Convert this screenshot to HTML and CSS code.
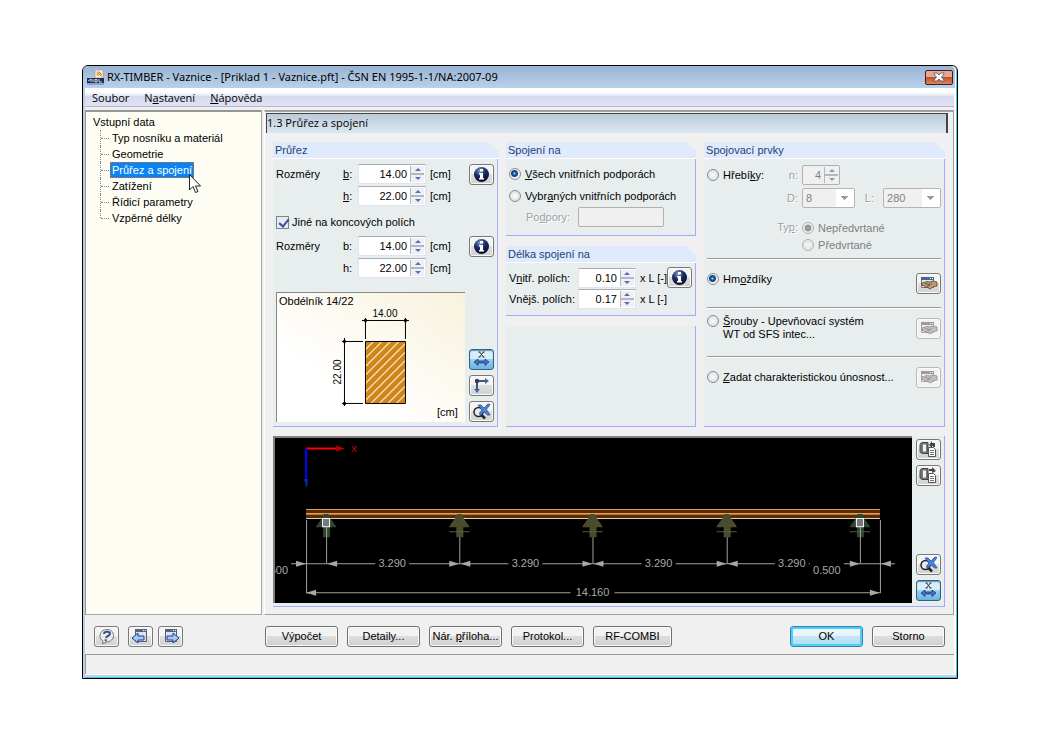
FILE: index.html
```html
<!DOCTYPE html>
<html lang="cs">
<head>
  <meta charset="UTF-8" />
  <meta name="viewport" content="width=device-width, initial-scale=1.0" />
  <title>RX-TIMBER - Vaznice</title>
  <link rel="stylesheet" href="styles.css">
</head>
<body>

  <!-- shared icons -->
  <svg class="defs" width="0" height="0" aria-hidden="true">
    <defs>
      <radialGradient id="ball" cx="0.4" cy="0.25" r="0.8">
        <stop offset="0" stop-color="#8d9ccc" />
        <stop offset="0.45" stop-color="#1c2a66" />
        <stop offset="1" stop-color="#050a26" />
      </radialGradient>
    </defs>
    <symbol id="i-info" viewBox="0 0 19 17">
      <circle cx="9.5" cy="8.5" r="7.5" fill="url(#ball)" />
      <path d="M8 3h3v2.500H8zM7 7h4v5h1v1.500H7V12h1V8.500H7z" fill="#fff" />
    </symbol>
    <symbol id="i-dim" viewBox="0 0 19 17">
      <path d="M7.500 1l4 5M11.500 1l-4 5M6.500 1h2M10.500 1h2M6.500 6h2M10.500 6h2" stroke="#333" stroke-width="1" fill="none" />
      <path d="M2 11l4-3v2h7V8l4 3-4 3.500V12H6v2.500z" fill="#4a70c8" stroke="#203870" stroke-width="0.8" />
    </symbol>
    <symbol id="i-axes" viewBox="0 0 19 17">
      <path d="M5 4h9M5 4v9" stroke="#44546c" stroke-width="2" fill="none" />
      <path d="M13 1l4 3-4 3zM2 12l3 4 3-4z" fill="#3d66b0" />
      <circle cx="5" cy="4" r="2.200" fill="#33425c" />
    </symbol>
    <symbol id="i-zoom" viewBox="0 0 19 17">
      <circle cx="6.500" cy="9" r="4.500" fill="#e4ebf2" stroke="#222" stroke-width="1.500" />
      <path d="M6 2h3l3 3 4-4 2 .5-3.500 5L18 12h-2.500L12 9l-4 3-.5-2L10 7z" fill="#4a82d8" stroke="#1f458f" stroke-width="0.7" />
      <path d="M9.500 12l3.500 3.500" stroke="#222" stroke-width="2.500" />
    </symbol>
    <symbol id="i-lib" viewBox="0 0 19 17">
      <path d="M2.500 2.500h12v10h-12z" fill="#e8e8ea" stroke="#777" />
      <path d="M2 2h13v3H2z" fill="#45669c" />
      <path d="M11 3h1v1h-1zM13 3h1v1h-1z" fill="#fff" />
      <path d="M3 8l5-1.500 3 .5 3-1 4 1v4l-3 .5-4 2.500-2-1.500-3-.5-1-1.500H3z" fill="#bd9c70" stroke="#5c452b" stroke-width="0.8" />
      <path d="M6 8.500l4 1 3-1M8 11l3-.5" stroke="#5c452b" stroke-width="0.8" fill="none" />
    </symbol>
    <symbol id="i-copy" viewBox="0 0 19 17">
      <path d="M4 1.500h5v11H4c-2 0-3-1-3-3v-5c0-2 1-3 3-3z" fill="#777" stroke="#444" />
      <path d="M4 3.500h3v7H4z" fill="#f4f4f4" />
      <path d="M9.500 6.500h5l2 2v7h-7z" fill="#fff" stroke="#555" />
      <path d="M11 9.500h4M11 11.500h4M11 13.500h4" stroke="#777" fill="none" />
    </symbol>
    <symbol id="i-page" viewBox="0 0 19 17">
      <path d="M4.500 1.500h11v12h-11z" fill="#dde3ec" stroke="#555d6c" />
      <path d="M4 1h12v3H4z" fill="#5a6478" />
      <path d="M12 2h1v1h-1zM14 2h1v1h-1z" fill="#fff" />
    </symbol>
    <!-- support arrow, tip in 0,0 -->
    <symbol id="i-support" viewBox="-12 -2 24 26" overflow="visible">
      <path d="M-2 0h4l2 2v2l6 8v1H4v10h-7V13h-7v-1l6-8V2z" />
    </symbol>
  </svg>

  <main class="window">
    <header class="titlebar">
      <svg class="app-icon" width="18" height="15" viewBox="0 0 18 15">
        <path d="M8 0h8v8H8z" fill="#fff3d8" stroke="#b8955c" stroke-width="0.7" />
        <path d="M9.500 2l5 4M11 1.500l4 3M9.500 4l2 2" stroke="#b26b20" fill="none" />
        <path d="M0 8h17v5H0z" fill="#1d2d58" />
        <path d="M1 11l3-2v3M6 9v3M8 9.500h2V12H8zM12 9v3h3" stroke="#fff" stroke-width="0.8" fill="none" />
        <path d="M0 14h17" stroke="#5c80b4" />
      </svg>
      <h1>RX-TIMBER - Vaznice - [Priklad 1 - Vaznice.pft] - ČSN EN 1995-1-1/NA:2007-09</h1>
      <button class="close" type="button" aria-label="Zavřít">
        <svg width="12" height="10" viewBox="0 0 12 10">
          <path d="M1 1h3l2 2 2-2h3v1L8.500 5 11 8v1H8L6 7 4 9H1V8l2.500-3L1 2z" fill="#fff" stroke="#4b4f68" stroke-width="0.8" />
        </svg>
      </button>
    </header>

    <nav class="menu">
      <a href="#">Soubor</a>
      <a href="#">N<u>a</u>stavení</a>
      <a href="#"><u>N</u>ápověda</a>
    </nav>

    <div class="workspace">
      <aside class="tree">
        <a href="#">Vstupní data</a>
        <ul>
          <li><a href="#">Typ nosníku a materiál</a></li>
          <li><a href="#">Geometrie</a></li>
          <li class="current">
            <a href="#">Průřez a spojení</a>
            <svg class="pointer" width="13" height="20" viewBox="0 0 13 20">
              <path d="M.5.500v15.500l3.500-3.500 2.500 6 2.500-1-2.500-5.500h5z" fill="#fff" stroke="#222" />
            </svg>
          </li>
          <li><a href="#">Zatížení</a></li>
          <li><a href="#">Řídicí parametry</a></li>
          <li><a href="#">Vzpěrné délky</a></li>
        </ul>
      </aside>

      <div class="pane">
        <h2 class="pane-title">1.3 Průřez a spojení</h2>

        <form class="panels" id="params">
          <section class="panel section-panel">
            <h3>Průřez</h3>
            <div class="panel-body">
              <div class="size-row">
                <span>Rozměry</span>
                <label for="b1"><u>b</u>:</label>
                <span class="number">
                  <input id="b1" type="text" value="14.00">
                  <span class="spin"><button type="button" aria-label="Více"></button><button type="button" aria-label="Méně"></button></span>
                </span>
                <span>[cm]</span>
                <button class="tool" type="button" aria-label="Informace"><svg><use href="#i-info" /></svg></button>
              </div>
              <div class="size-row">
                <span></span>
                <label for="h1"><u>h</u>:</label>
                <span class="number">
                  <input id="h1" type="text" value="22.00">
                  <span class="spin"><button type="button" aria-label="Více"></button><button type="button" aria-label="Méně"></button></span>
                </span>
                <span>[cm]</span>
              </div>
              <label class="check-row"><input type="checkbox" checked> Jiné na koncových polích</label>
              <div class="size-row">
                <span>Rozměry</span>
                <label for="b2">b:</label>
                <span class="number">
                  <input id="b2" type="text" value="14.00">
                  <span class="spin"><button type="button" aria-label="Více"></button><button type="button" aria-label="Méně"></button></span>
                </span>
                <span>[cm]</span>
                <button class="tool" type="button" aria-label="Informace"><svg><use href="#i-info" /></svg></button>
              </div>
              <div class="size-row">
                <span></span>
                <label for="h2">h:</label>
                <span class="number">
                  <input id="h2" type="text" value="22.00">
                  <span class="spin"><button type="button" aria-label="Více"></button><button type="button" aria-label="Méně"></button></span>
                </span>
                <span>[cm]</span>
              </div>

              <div class="preview-row">
                <div class="preview">
                  <svg viewBox="0 0 188 129">
                    <defs>
                      <pattern id="hatch" width="6" height="6" patternUnits="userSpaceOnUse" patternTransform="rotate(45)">
                        <path d="M0 0h6v6H0z" fill="#cf8418" />
                        <path d="M.5 0v6" stroke="#fff4dc" stroke-width="1.200" />
                      </pattern>
                    </defs>
                    <text x="2" y="12">Obdélník 14/22</text>
                    <text x="160" y="123">[cm]</text>
                    <path d="M88.500 48.500h40v62h-40z" fill="url(#hatch)" stroke="#000" />
                    <path d="M85 27.500h47M88.500 25v21M128.500 25v21M67.500 45v68M65 48.500h21M65 110.500h21" stroke="#000" fill="none" />
                    <path d="M88.500 25l2 2.500-2 2.500-2-2.500zM128.500 25l2 2.500-2 2.500-2-2.500zM67.500 46l2 2.500-2 2.500-2-2.500zM67.500 108l2 2.500-2 2.500-2-2.500z" />
                    <text class="dim" x="108" y="24" text-anchor="middle">14.00</text>
                    <text class="dim" transform="translate(64 79) rotate(-90)" text-anchor="middle">22.00</text>
                  </svg>
                </div>
                <div class="tools">
                  <button class="tool on" type="button" aria-label="Kóty"><svg><use href="#i-dim" /></svg></button>
                  <button class="tool" type="button" aria-label="Osy"><svg><use href="#i-axes" /></svg></button>
                  <button class="tool" type="button" aria-label="Celý pohled"><svg><use href="#i-zoom" /></svg></button>
                </div>
              </div>
            </div>
          </section>

          <div class="column">
            <section class="panel">
              <h3>Spojení na</h3>
              <div class="panel-body">
                <label class="radio-row"><input type="radio" name="where" checked><span><u>V</u>šech vnitřních podporách</span></label>
                <label class="radio-row"><input type="radio" name="where"><span>Vybr<u>a</u>ných vnitřních podporách</span></label>
                <div class="support-row disabled">
                  <label for="supports">Po<u>d</u>pory:</label>
                  <input id="supports" type="text" disabled>
                </div>
              </div>
            </section>

            <section class="panel">
              <h3>Délka spojení na</h3>
              <div class="panel-body length-body">
                <div class="length-row">
                  <label for="inner">V<u>n</u>itř. polích:</label>
                  <span class="number">
                    <input id="inner" type="text" value="0.10">
                    <span class="spin"><button type="button" aria-label="Více"></button><button type="button" aria-label="Méně"></button></span>
                  </span>
                  <span>x L [-]</span>
                  <button class="tool" type="button" aria-label="Informace"><svg><use href="#i-info" /></svg></button>
                </div>
                <div class="length-row">
                  <label for="outer">Vnějš. polích:</label>
                  <span class="number">
                    <input id="outer" type="text" value="0.17">
                    <span class="spin"><button type="button" aria-label="Více"></button><button type="button" aria-label="Méně"></button></span>
                  </span>
                  <span>x L [-]</span>
                </div>
              </div>
            </section>

            <div class="panel blank"></div>
          </div>

          <section class="panel">
            <h3>Spojovací prvky</h3>
            <div class="panel-body">
              <div class="nails">
                <label class="radio-row"><input type="radio" name="fastener"><span>Hřebí<u>k</u>y:</span></label>
                <label class="disabled" for="count">n:</label>
                <span class="number off">
                  <input id="count" type="text" value="4" disabled>
                  <span class="spin"><button type="button" aria-label="Více" disabled></button><button type="button" aria-label="Méně" disabled></button></span>
                </span>
                <label class="disabled start-2" for="diameter">D:</label>
                <select id="diameter" disabled><option>8</option></select>
                <label class="disabled" for="length">L:</label>
                <select id="length" disabled><option>280</option></select>
                <span class="disabled type-label">Ty<u>p</u>:</span>
                <div class="types">
                  <label class="disabled"><input type="radio" name="drill" checked disabled>Nepředvrtané</label>
                  <label class="disabled"><input type="radio" name="drill" disabled>Předvrtané</label>
                </div>
              </div>
              <div class="option first">
                <label><input type="radio" name="fastener" checked><span>Hm<u>o</u>ždíky</span></label>
                <button class="tool" type="button" aria-label="Knihovna hmoždíků"><svg><use href="#i-lib" /></svg></button>
              </div>
              <div class="option double">
                <label><input type="radio" name="fastener"><span><u>Š</u>rouby - Upevňovací systém<br>WT od SFS intec...</span></label>
                <button class="tool" type="button" aria-label="Knihovna šroubů" disabled><svg><use href="#i-lib" /></svg></button>
              </div>
              <div class="option">
                <label><input type="radio" name="fastener"><span><u>Z</u>adat charakteristickou únosnost...</span></label>
                <button class="tool" type="button" aria-label="Zadat únosnost" disabled><svg><use href="#i-lib" /></svg></button>
              </div>
            </div>
          </section>
        </form>

        <section class="viewer">
          <div class="canvas">
            <svg viewBox="0 0 636 165">
              <!-- axes -->
              <path d="M31 10.500h32" stroke="#f00" stroke-width="2" />
              <path d="M61 7.500l9 3-9 3z" fill="#b00000" />
              <text class="axis" x="76" y="14">x</text>
              <path d="M31 10v33" stroke="#00f" stroke-width="2" />
              <path d="M29 41h4l-1 8h-1z" fill="#0828a0" />

              <!-- beam -->
              <path d="M31 71h573v9H31z" fill="#5c2c00" />
              <path d="M31 71.500h573M31 75.500h573" stroke="#d8a060" />
              <path d="M31 76.500h573" stroke="#b87838" />
              <path d="M31 80.500h573" stroke="#d8d0c8" />

              <!-- supports -->
              <g fill="#4b4c2e">
                <use href="#i-support" x="172" y="74" width="24" height="26" />
                <use href="#i-support" x="305" y="74" width="24" height="26" />
                <use href="#i-support" x="439" y="74" width="24" height="26" />
              </g>
              <g fill="#2d462e">
                <use href="#i-support" x="39" y="74" width="24" height="26" />
                <use href="#i-support" x="572" y="74" width="24" height="26" />
              </g>
              <path d="M174 93.500h20M307 93.500h20M441 93.500h20M574 93.500h20" stroke="#5c5c38" />
              <path d="M47.500 80.500h7v8h-7zM580.500 80.500h7v8h-7z" fill="#777" stroke="#fff" />

              <!-- dimension lines -->
              <g stroke="#a0a0a0" fill="none">
                <path d="M51.500 89v36M184.500 99v26M317.500 99v26M451.500 99v26M584.500 89v36" />
                <path d="M31.500 82v73M604.500 82v73" />
                <path d="M16 125.500h84M134 125.500h99M267 125.500h99M400 125.500h99M533 125.500h1M568 125.500h51" />
                <path d="M31 154.500h264M339 154.500h265" />
              </g>
              <g fill="#a8a8a8">
                <path d="M21 122.500l10 3-10 3zM62 122.500l-10 3 10 3z" />
                <path d="M174 122.500l10 3-10 3zM195 122.500l-10 3 10 3z" />
                <path d="M307 122.500l10 3-10 3zM328 122.500l-10 3 10 3z" />
                <path d="M441 122.500l10 3-10 3zM462 122.500l-10 3 10 3z" />
                <path d="M574 122.500l10 3-10 3zM615 122.500l-10 3 10 3z" />
                <path d="M41 151.500l-10 3 10 3zM594 151.500l10 3-10 3z" />
                <text x="117" y="129" text-anchor="middle">3.290</text>
                <text x="250" y="129" text-anchor="middle">3.290</text>
                <text x="383" y="129" text-anchor="middle">3.290</text>
                <text x="516" y="129" text-anchor="middle">3.290</text>
                <text x="317" y="158" text-anchor="middle">14.160</text>
                <text x="13" y="136" text-anchor="end">0.500</text>
                <text x="551" y="136" text-anchor="middle">0.500</text>
              </g>
            </svg>
          </div>
          <div class="tools">
            <button class="tool" type="button" aria-label="Kopírovat"><svg><use href="#i-copy" /><path d="M10 4l3-4v2h3v4h-2V5h-1v2z" fill="#444" /></svg></button>
            <button class="tool" type="button" aria-label="Vložit"><svg><use href="#i-copy" /><path d="M10 2h3V0l4 4-4 2V4h-3z" fill="#444" /></svg></button>
            <button class="tool push" type="button" aria-label="Celý pohled"><svg><use href="#i-zoom" /></svg></button>
            <button class="tool on" type="button" aria-label="Kóty"><svg><use href="#i-dim" /></svg></button>
          </div>
        </section>
      </div>
    </div>

    <footer class="actions">
      <div class="nav-buttons">
        <button class="tool help" type="button" aria-label="Nápověda">
          <svg viewBox="0 0 19 17">
            <path d="M10 1.500c4 0 6.500 2.500 6.500 6s-3 6.500-7 6.500l-4 2 .5-3C4 12 3 10 3 8c0-4 3-6.500 7-6.500z" fill="#e8ebf0" stroke="#777" />
            <path d="M7 6c0-3 6-3 6-.5C13 8 9.500 7.500 9 10M8.700 11.200v2" stroke="#33507c" stroke-width="2" fill="none" />
          </svg>
        </button>
        <button class="tool" type="button" aria-label="Předchozí">
          <svg><use href="#i-page" /><path d="M1 10l6-5v3h6v4H7v3z" fill="#a9c6f4" stroke="#203c8c" /></svg>
        </button>
        <button class="tool" type="button" aria-label="Další">
          <svg><use href="#i-page" /><path d="M18 10l-6-5v3H6v4h6v3z" fill="#a9c6f4" stroke="#203c8c" /></svg>
        </button>
      </div>
      <button class="btn" type="button">Výpočet</button>
      <button class="btn" type="button">Detaily...</button>
      <button class="btn" type="button">Nár. <u>p</u>říloha...</button>
      <button class="btn" type="button">Protokol...</button>
      <button class="btn wide" type="button">RF-COMBI</button>
      <button class="btn ok" type="submit" form="params">OK</button>
      <button class="btn" type="button">Storno</button>
    </footer>

    <div class="status"></div>
  </main>

</body>
</html>
```
FILE: styles.css
```css
* {
  box-sizing: border-box;
}

body {
  margin: 0;
  padding: 65px 82px;
  background-color: #fff;
  color: #000;
  font-family: "Liberation Sans", Arial, sans-serif;
  font-size: 11px;
  line-height: 16px;
}

h1, h2, h3, ul {
  margin: 0;
  padding: 0;
  font-weight: normal;
}

a {
  color: inherit;
  text-decoration: none;
}

button, input, select {
  margin: 0;
  font: inherit;
  color: inherit;
}

.defs {
  position: absolute;
}

.window {
  border: 1px solid #000;
  border-radius: 6px 6px 0 0;
  background-color: #f0f0f0;
  box-shadow: inset 2px 0 #bccfe6, inset -1px -1px #38cdf0, inset 0 -3px #c3d3e6, inset -3px 0 #fff;
  padding: 0 3px 4px 2px;
}

/* title and menu */

.titlebar {
  display: flex;
  align-items: center;
  height: 22px;
  margin: 0 -1px 0 -2px;
  padding: 0 2px 0 4px;
  border-radius: 5px 5px 0 0;
  background: linear-gradient(#98b3d3, #b9d1ea);
}

.titlebar h1 {
  flex: 1;
  margin-left: 2px;
  font-family: "Noto Sans", "Open Sans", sans-serif;
  font-size: 11px;
}

.close {
  display: flex;
  align-items: center;
  justify-content: center;
  width: 28px;
  height: 15px;
  padding: 0;
  border: 1px solid #4a1820;
  border-radius: 2px;
  background: linear-gradient(#e6a896 45%, #bd5427 50%, #d98561);
}

.menu {
  display: flex;
  gap: 15px;
  height: 19px;
  padding: 2px 7px 0;
  border-bottom: 1px solid #b4b8c4;
  background: linear-gradient(#fff 20%, #e8ebf6 40%, #d5daee 45%, #dfe3f4);
  font-family: "Open Sans", "Noto Sans", sans-serif;
  font-size: 11px;
}

/* tree */

.workspace {
  display: flex;
  gap: 2px;
  margin-top: 3px;
}

.tree {
  flex: 0 0 177px;
  padding: 2px 7px;
  border: 1px solid #969696;
  border-top-width: 2px;
  border-color: #969696 #a8a8a8 #a8a8a8 #969696;
  background-color: #fdfdf4;
}

.tree ul {
  list-style: none;
  margin-left: 7px;
}

.tree li {
  display: flex;
  position: relative;
  height: 16px;
  border-left: 1px dotted #888;
}

.tree li:last-child {
  height: 8px;
}

.tree li::before {
  content: "";
  width: 8px;
  height: 8px;
  border-bottom: 1px dotted #888;
}

.tree li a {
  height: 16px;
  margin-left: 1px;
  padding: 0 2px;
  white-space: nowrap;
}

.tree .current a {
  background-color: #0a84f4;
  outline: 1px dotted #d86a10;
  outline-offset: -1px;
  color: #fff;
}

.pointer {
  position: absolute;
  left: 88px;
  top: 12px;
}

/* right pane */

.pane {
  flex: 1;
  min-width: 0;
  padding: 1px 8px 7px 1px;
  border: 1px solid #a0a0a0;
  border-top-width: 2px;
  border-left-color: #fff;
}

.pane-title {
  height: 20px;
  margin-right: -3px;
  border: 1px solid #444;
  border-width: 1px 2px 0 1px;
  background: linear-gradient(#bccbd8, #dbe7f3);
  font-family: "Open Sans", "Noto Sans", sans-serif;
  font-size: 11px;
  line-height: 18px;
}

.panels {
  display: grid;
  grid-template-columns: 225fr 190fr 241fr;
  gap: 8px;
  margin: 9px 0 0 7px;
}

.column {
  display: flex;
  flex-direction: column;
  gap: 10px;
}

.panel {
  min-width: 0;
  border: 1px solid #a9a9f2;
  border-width: 0 1px 1px 0;
  background-color: #e8eeee;
  clip-path: polygon(0 0, calc(100% - 10px) 0, 100% 10px, 100% 100%, 0 100%);
}

.panel h3 {
  height: 17px;
  margin-right: -1px;
  padding-left: 2px;
  border-bottom: 1px solid #fff;
  background-color: #dfebfd;
  color: #1c3f74;
  font-size: 11px;
}

.panel-body {
  padding: 4px 3px;
}

.blank {
  flex: 1;
  clip-path: none;
}

.size-row {
  display: grid;
  grid-template-columns: 67px 15px 68px 1fr 25px;
  align-items: center;
  height: 22px;
}

.size-row span:nth-child(4) {
  padding-left: 4px;
}

.check-row {
  display: flex;
  align-items: center;
  gap: 3px;
  height: 22px;
  margin: 4px 0 2px;
}

.radio-row {
  display: flex;
  align-items: center;
  gap: 4px;
  height: 22px;
  white-space: nowrap;
}

/* inputs */

input[type="checkbox"] {
  appearance: none;
  width: 13px;
  height: 13px;
  border: 1px solid #808488;
  background: #e8ebf0;
}

input[type="checkbox"]:checked::before {
  content: "";
  display: block;
  width: 4px;
  height: 8px;
  margin-left: 4px;
  border: solid #34509a;
  border-width: 0 2px 2px 0;
  transform: rotate(40deg);
}

input[type="radio"] {
  appearance: none;
  flex: none;
  width: 12px;
  height: 12px;
  border: 1px solid #888c90;
  border-radius: 50%;
  background: radial-gradient(#fff, #cfd3d6);
}

input[type="radio"]:checked {
  background: radial-gradient(circle at 45% 45%, #9fe0ff 0, #1c5ca8 20%, #123a78 38%, #eef2f6 52%);
}

input[type="radio"]:disabled {
  border-color: #b0b0b0;
  background: radial-gradient(#f4f4f4, #e0e0e0);
}

input[type="radio"]:checked:disabled {
  background: radial-gradient(#b0b0b0 0, #8c8c8c 40%, #f0f0f0 55%);
}

.number {
  display: flex;
  height: 20px;
  padding: 1px;
  border: 1px solid #e0e4ee;
  border-top-color: #a8acb4;
  background-color: #fff;
}

.number input {
  flex: 1;
  width: 0;
  min-width: 0;
  padding: 0 3px 0 0;
  border: none;
  background: none;
  text-align: right;
}

.spin {
  display: flex;
  flex-direction: column;
  gap: 2px;
  width: 14px;
  background-color: #b4b8bc;
  border-left: 1px solid #b4b8bc;
}

.spin button {
  display: flex;
  align-items: center;
  justify-content: center;
  flex: 1;
  min-height: 0;
  padding: 0;
  border: none;
  background-color: #f0f0f4;
}

.spin button::before {
  content: "";
  border: 3px solid transparent;
  border-top-width: 0;
  border-bottom-color: #5470bc;
}

.spin button:last-child::before {
  border-width: 3px 3px 0;
  border-top-color: #5470bc;
}

.number.off {
  width: 38px;
  border: 1px solid #b0b0b0;
  border-radius: 2px;
  background-color: #f0f0f0;
  color: #808080;
}

.off .spin button::before {
  border-bottom-color: #999;
}

.off .spin button:last-child::before {
  border-top-color: #999;
}

select {
  appearance: none;
  width: 100%;
  height: 20px;
  padding: 0 3px;
  border: 1px solid #b4b4b4;
  border-radius: 2px;
  background:
    linear-gradient(#999, #999) right 7px top 8px / 5px 1px no-repeat,
    linear-gradient(#999, #999) right 6px top 7px / 7px 1px no-repeat,
    linear-gradient(#999, #999) right 8px top 9px / 3px 1px no-repeat,
    linear-gradient(#999, #999) right 9px top 10px / 1px 1px no-repeat,
    linear-gradient(to left, #fff 18px, #f0f0f0 18px);
}

select:disabled {
  color: #808080;
  opacity: 1;
}

.disabled {
  color: #a0a0a0;
  text-shadow: 1px 1px #fff;
}

/* buttons */

.tool {
  display: flex;
  align-items: center;
  justify-content: center;
  flex: none;
  width: 25px;
  height: 21px;
  padding: 0;
  border: 1px solid #787878;
  border-radius: 3px;
  background: linear-gradient(#f4f4f4 45%, #dedede 50%, #d2d2d2);
  box-shadow: inset 0 0 0 1px #fafafa;
}

.tool svg {
  width: 19px;
  height: 17px;
}

.tool.on {
  border-color: #2c628b;
  background: linear-gradient(#d6edfa 45%, #9ad0ef 50%, #6bb4e0);
  box-shadow: inset 0 1px 1px #6d91ab;
}

.tool:disabled {
  border-color: #b8b8b8;
  background: #f2f2f2;
}

.tool:disabled svg {
  filter: grayscale(1);
  opacity: 0.6;
}

.tools {
  display: flex;
  flex-direction: column;
  gap: 5px;
}

.preview-row {
  display: flex;
  gap: 4px;
  margin-top: 13px;
}

.preview {
  flex: 1;
  min-width: 0;
  border: 1px solid #888;
  border-width: 1px 0 0 1px;
  background: linear-gradient(to top right, #fff 30%, #f8f2dc);
}

.preview svg, .canvas svg {
  display: block;
  width: 100%;
  height: auto;
}

.preview text {
  font-size: 11px;
}

.preview .dim {
  font-size: 10px;
}

.preview-row .tools {
  justify-content: flex-end;
}

.support-row {
  display: grid;
  grid-template-columns: 52px 86px;
  align-items: center;
  padding-left: 17px;
  margin-bottom: 4px;
}

.support-row input {
  width: 100%;
  height: 20px;
  border: 1px solid #b0b0b0;
  border-radius: 2px;
  background-color: #f0f0f0;
}

.length-body {
  padding-bottom: 6px;
}

.length-row {
  display: grid;
  grid-template-columns: 69px 58px 1fr 25px;
  align-items: center;
  height: 21px;
  white-space: nowrap;
}

.length-row span:nth-child(3) {
  padding-left: 4px;
}

/* fasteners */

.nails {
  display: grid;
  grid-template-columns: 72px 23px 53px 28px 1fr;
  grid-template-rows: 23px 24px;
  align-items: center;
  height: 95px;
}

.nails > .disabled {
  padding-right: 4px;
  text-align: right;
}

.nails .start-2 {
  grid-column: 2;
}

.nails > label.disabled:nth-of-type(4) {
  padding-right: 9px;
}

.nails > .type-label {
  grid-column: 1 / 3;
  align-self: start;
  margin-top: 9px;
}

.types {
  grid-column: 3 / 6;
  align-self: start;
  padding-top: 9px;
}

.types label {
  display: flex;
  align-items: center;
  gap: 4px;
  height: 17px;
  color: #808080;
  text-shadow: none;
}

.option {
  display: flex;
  align-items: flex-start;
  justify-content: space-between;
  height: 49px;
  padding-top: 6px;
  border-top: 1px solid #999;
  box-shadow: inset 0 1px #fff;
}

.option:last-child {
  height: 64px;
}

.option label {
  display: flex;
  gap: 4px;
  padding-top: 8px;
  line-height: 13px;
}

.option.double label {
  padding-top: 1px;
}

.option .tool {
  margin-top: 4px;
}

.option.first .tool {
  margin-top: 8px;
}

/* beam view */

.viewer {
  display: flex;
  gap: 4px;
  margin: 9px 0 0 7px;
  padding: 0 3px 3px 0;
  border: 1px solid #a9a9f2;
  border-width: 0 1px 1px 0;
  background-color: #e8eeee;
}

.canvas {
  flex: 1;
  min-width: 0;
  border: 2px solid #808080;
  border-width: 2px 0 0 2px;
  background-color: #000;
}

.canvas text {
  font-size: 11px;
}

.canvas .axis {
  fill: #d00000;
}

.viewer .tools {
  padding: 3px 0 2px;
}

.push {
  margin-top: auto;
}

/* footer */

.actions {
  display: flex;
  align-items: center;
  gap: 9px;
  height: 39px;
  padding: 4px 9px 0 9px;
}

.nav-buttons {
  display: flex;
  gap: 5px;
  margin-right: 73px;
}

.help {
  margin-right: 4px;
}

.btn {
  width: 73px;
  height: 21px;
  padding: 0;
  border: 1px solid #707070;
  border-radius: 3px;
  background: linear-gradient(#f2f2f2 45%, #dddddd 50%, #cfcfcf);
  box-shadow: inset 0 0 0 1px #fafafa;
  line-height: 19px;
  white-space: nowrap;
}

.btn.wide {
  width: 79px;
}

.btn.ok {
  margin-left: auto;
  border-color: #3c7fb1;
  background: linear-gradient(#e8f5fc 45%, #c4e5f6 50%, #b4dcf2);
  box-shadow: inset 0 0 0 2px #48d0f8;
}

.status {
  height: 20px;
  border: 1px solid #999;
  border-width: 1px 0 0 1px;
  box-shadow: 0 1px #fff;
}
```
